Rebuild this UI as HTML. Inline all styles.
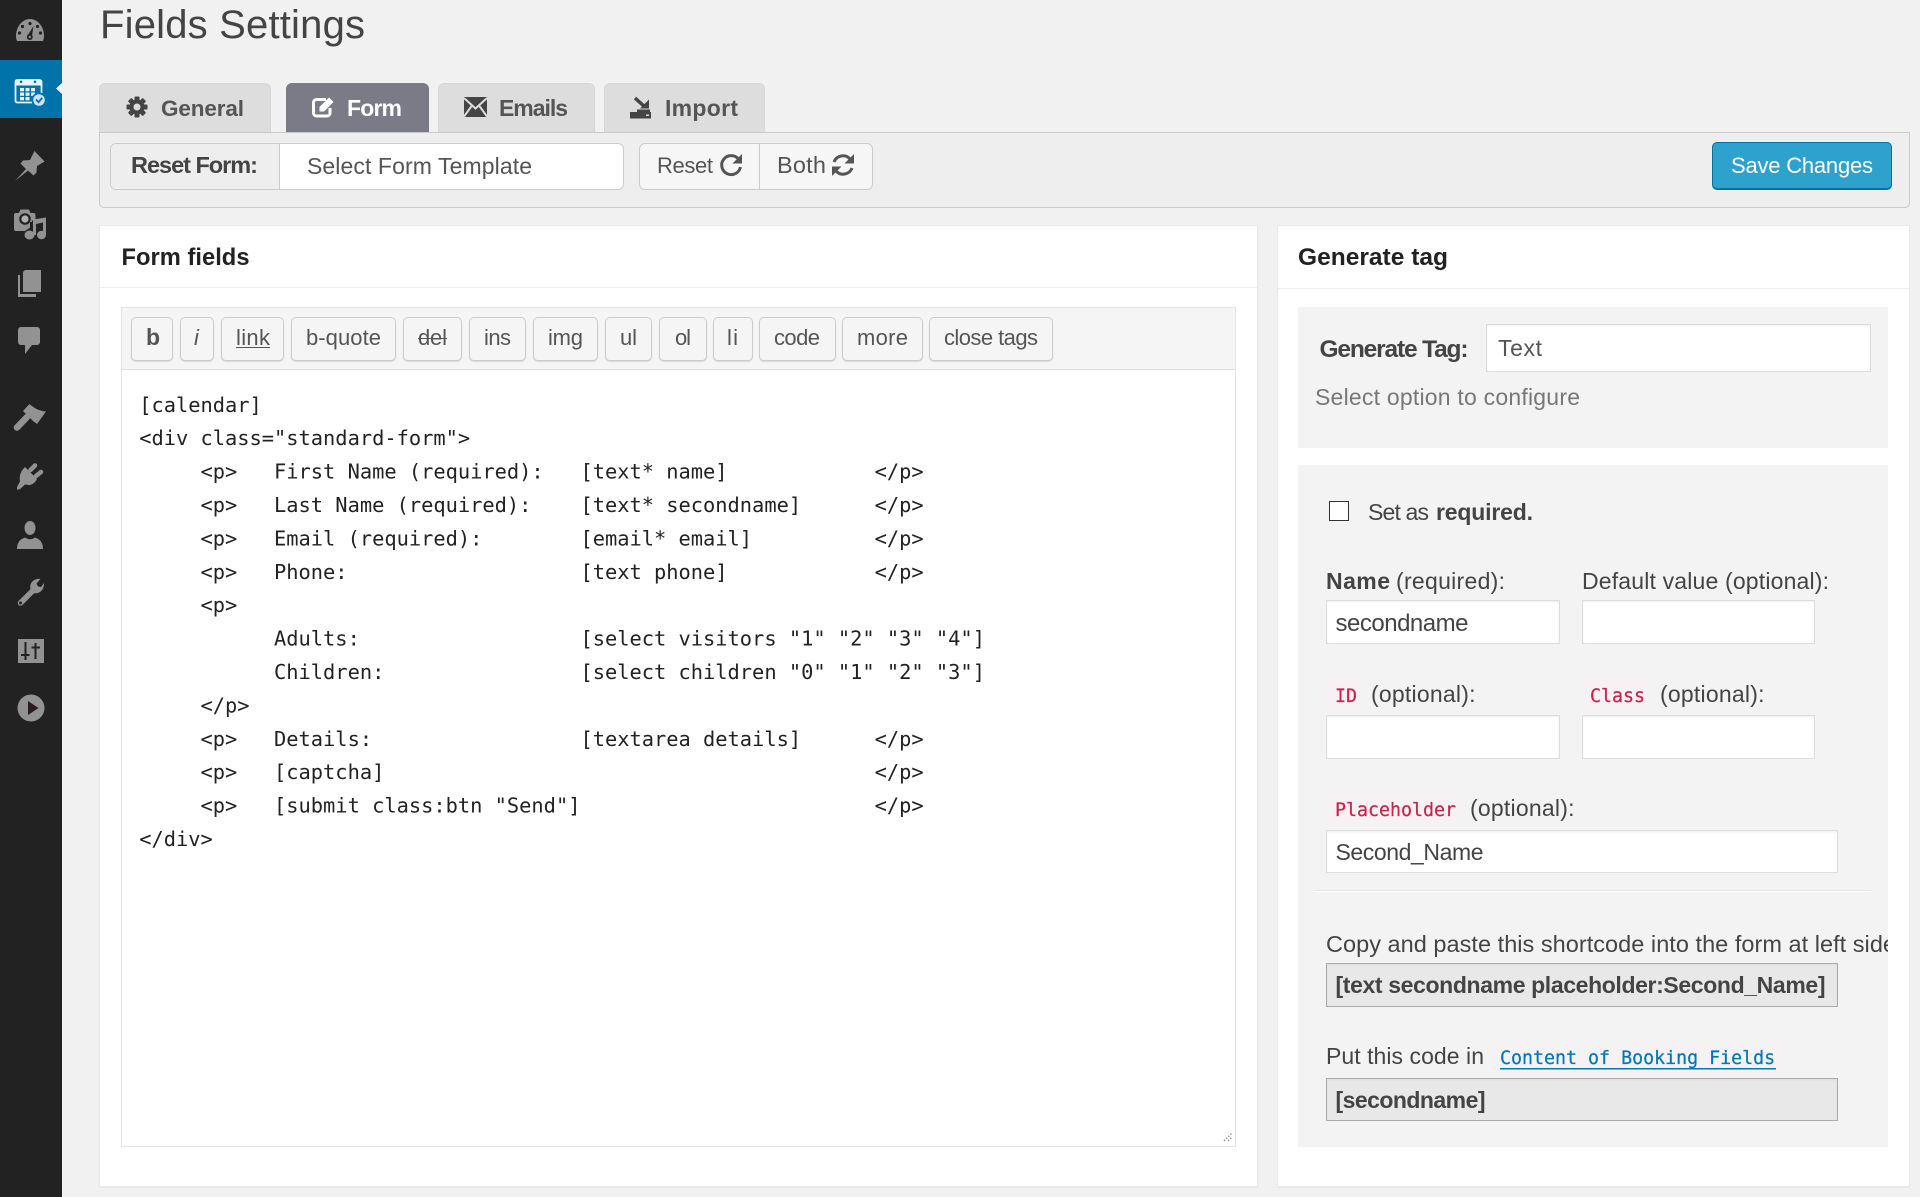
<!DOCTYPE html>
<html lang="en"><head><meta charset="utf-8"><title>Fields Settings</title>
<style>
html,body{margin:0;padding:0;width:1920px;height:1197px;overflow:hidden;background:#f1f1f1}
.b{position:absolute;box-sizing:border-box}
.tab{background:#ddd;border:1px solid #d6d6d6;border-bottom:0;border-radius:6px 6px 0 0;top:83px;height:49px}
.btn{background:#f5f5f5;border:1px solid #ccc;border-radius:5px;top:317px;height:44px;box-shadow:0 1px 1px rgba(0,0,0,.12)}
.inp{background:#fff;border:1px solid #ddd;box-shadow:inset 0 1px 2px rgba(0,0,0,.07)}
.ro{background:#e8e8e8;border:1px solid #aaa;box-shadow:inset 0 1px 2px rgba(0,0,0,.05)}
.code{background:#f6f1f3}
svg{position:absolute;left:0;top:0}
text{font-family:"Liberation Sans",sans-serif;font-size:22px;fill:#555;white-space:pre}
.k{font-family:"DejaVu Sans Mono","Liberation Mono",monospace;font-size:20.38px;fill:#222}
.m{font-family:"DejaVu Sans Mono","Liberation Mono",monospace;font-size:18.3px;fill:#c7254e;stroke:#c7254e;stroke-width:.25px}
.s{font-weight:700}
.d{fill:#444;font-size:23px}
.g{fill:#929292}
</style></head><body>
<div class="b" style="left:0;top:0;width:62px;height:1197px;background:#222"></div>
<div class="b" style="left:0;top:60px;width:62px;height:58px;background:#0073aa"></div>

<div class="b tab" style="left:99px;width:172px"></div>
<div class="b tab" style="left:286px;width:143px;background:#7b7a87;border-color:#7b7a87"></div>
<div class="b tab" style="left:438px;width:157px"></div>
<div class="b tab" style="left:604px;width:161px"></div>
<div class="b" style="left:99px;top:132px;width:1811px;height:76px;background:#eee;border:1px solid #c8c8ce;border-radius:0 0 5px 5px"></div>
<div class="b" style="left:110px;top:143px;width:514px;height:47px;background:#fff;border:1px solid #ccc;border-radius:6px;overflow:hidden"><div class="b" style="left:0;top:0;width:169px;height:45px;background:#eee;border-right:1px solid #ccc"></div></div>
<div class="b" style="left:639px;top:143px;width:234px;height:47px;background:#f6f6f6;border:1px solid #ccc;border-radius:6px"><div class="b" style="left:119px;top:0;width:1px;height:46px;background:#ccc"></div></div>
<div class="b" style="left:1712px;top:142px;width:180px;height:48px;background:#2ea2cc;border:1px solid #0074a2;border-bottom-width:2px;border-radius:5px"></div>

<div class="b" style="left:99px;top:225px;width:1159px;height:962px;background:#fff;border:1px solid #e8e8e8;box-shadow:0 1px 1px rgba(0,0,0,.04)"></div>
<div class="b" style="left:100px;top:287px;width:1157px;height:1px;background:#eee"></div>
<div class="b" style="left:121px;top:307px;width:1115px;height:840px;background:#fff;border:1px solid #e5e5e5"></div>
<div class="b" style="left:122px;top:308px;width:1113px;height:62px;background:#f5f5f5;border-bottom:1px solid #ddd"></div>
<div class="b btn" style="left:131px;width:42px"></div>
<div class="b btn" style="left:180px;width:34px"></div>
<div class="b btn" style="left:221px;width:63px"></div>
<div class="b btn" style="left:291px;width:105px"></div>
<div class="b btn" style="left:403px;width:59px"></div>
<div class="b btn" style="left:469px;width:57px"></div>
<div class="b btn" style="left:533px;width:65px"></div>
<div class="b btn" style="left:605px;width:47px"></div>
<div class="b btn" style="left:659px;width:48px"></div>
<div class="b btn" style="left:713px;width:40px"></div>
<div class="b btn" style="left:759px;width:77px"></div>
<div class="b btn" style="left:842px;width:81px"></div>
<div class="b btn" style="left:929px;width:124px"></div>

<div class="b" style="left:1277px;top:225px;width:633px;height:962px;background:#fff;border:1px solid #e8e8e8;box-shadow:0 1px 1px rgba(0,0,0,.04)"></div>
<div class="b" style="left:1278px;top:288px;width:631px;height:1px;background:#eee"></div>
<div class="b" style="left:1298px;top:307px;width:590px;height:141px;background:#f3f3f3"></div>
<div class="b" style="left:1298px;top:465px;width:590px;height:682px;background:#f3f3f3"></div>
<div class="b inp" style="left:1486px;top:324px;width:385px;height:48px"></div>
<div class="b" style="left:1329px;top:501px;width:20px;height:20px;background:#fff;border:1px solid #333"></div>
<div class="b inp" style="left:1326px;top:600px;width:234px;height:44px"></div>
<div class="b inp" style="left:1582px;top:600px;width:233px;height:44px"></div>
<div class="b code" style="left:1326px;top:678px;width:34px;height:34px"></div>
<div class="b code" style="left:1583px;top:678px;width:66px;height:34px"></div>
<div class="b inp" style="left:1326px;top:715px;width:234px;height:44px"></div>
<div class="b inp" style="left:1582px;top:715px;width:233px;height:44px"></div>
<div class="b code" style="left:1326px;top:793px;width:135px;height:33px"></div>
<div class="b inp" style="left:1326px;top:830px;width:512px;height:43px"></div>
<div class="b" style="left:1315px;top:890px;width:556px;height:1px;background:#e6e6e6"></div>
<div class="b" style="left:1315px;top:891px;width:556px;height:1px;background:#fff"></div>
<div class="b ro" style="left:1326px;top:963px;width:512px;height:44px"></div>
<div class="b code" style="left:1494px;top:1045px;width:288px;height:30px"></div>
<div class="b ro" style="left:1326px;top:1078px;width:512px;height:43px"></div>

<svg width="1920" height="1197" viewBox="0 0 1920 1197">
<defs><clipPath id="c"><rect x="1298" y="920" width="590" height="60"/></clipPath></defs>

<!-- sidebar icons -->
<path class="g" d="M16 36C16 27 22 19 30 19C38 19 44 27 44 36C44 38 43.500 40 43 41H17C16.500 40 16 38 16 36Z"/>
<g fill="#222"><circle cx="30" cy="23.500" r="1.600"/><circle cx="22.500" cy="26.500" r="1.600"/><circle cx="37.500" cy="26.500" r="1.600"/><circle cx="19.500" cy="33" r="1.600"/><circle cx="40.500" cy="33" r="1.600"/><path d="M33.500 26L32 35.500L28 35Z"/><circle cx="29.800" cy="37" r="3"/></g><circle cx="29.800" cy="37" r="1.200" fill="#929292"/>

<path fill="none" stroke="#e8f2f7" stroke-width="1.800" d="M34 102.500H17A2 2 0 0 1 15.500 100.500V82A2 2 0 0 1 17 80H39.500A2 2 0 0 1 41.500 82V93"/>
<rect x="15" y="80" width="27" height="5.500" fill="#e8f2f7"/>
<circle cx="21" cy="81.800" r="1.300" fill="#0073aa"/><circle cx="35" cy="81.800" r="1.300" fill="#0073aa"/>
<g fill="#e8f2f7"><rect x="20" y="88" width="4" height="3.300"/><rect x="25.500" y="88" width="4" height="3.300"/><rect x="31" y="88" width="4" height="3.300"/><rect x="20" y="92.500" width="4" height="3.300"/><rect x="25.500" y="92.500" width="4" height="3.300"/><rect x="31" y="92.500" width="4" height="3.300"/><rect x="20" y="97" width="4" height="3.300"/><rect x="25.500" y="97" width="4" height="3.300"/></g>
<circle cx="39" cy="100" r="7.500" fill="#0073aa"/><circle cx="39" cy="100" r="5.800" fill="#cfe3ee"/>
<path d="M36 99.500L38.600 102.200L42.200 97.800" fill="none" stroke="#0073aa" stroke-width="1.800"/>
<path d="M62 83L56 88.500L62 94Z" fill="#f1f1f1"/>

<path class="g" d="M15 181L26 169L20.500 163.500L23 160.500L30 160L34.500 151L44.500 161.500L37 166L36.500 172.500L33.500 175.500L28 170.500Z"/>

<path class="g" d="M20.500 209.500H29L30.500 213H33.500Q35.500 213 35.500 215V224L25 231H16Q14 231 14 229V215Q14 213 16 213H19Z"/>
<circle cx="25" cy="219" r="5.800" fill="#222"/><circle cx="25" cy="219" r="3.600" fill="#b0b0b0"/>
<path fill="none" stroke="#222" stroke-width="3" d="M32 222H47M31.500 222V231L25 237"/>
<path class="g" d="M33 226V219.500L46 217.500V235H43V222.500L36 224V235H33Z"/>
<ellipse class="g" cx="29.500" cy="235" rx="5" ry="4.500"/><ellipse class="g" cx="41.500" cy="235" rx="4.500" ry="4.300"/>

<path class="g" d="M18 275H20V294H36V297H18Z"/>
<path class="g" d="M25 270H41V292H23V272Z"/>

<path class="g" d="M21 327H37A3 3 0 0 1 40 330V342A3 3 0 0 1 37 345H32L25 354V345H21A3 3 0 0 1 18 342V330A3 3 0 0 1 21 327Z"/>

<path class="g" d="M23 411L29.500 404C34 408 39 411 46 411.500L37 424L33 421Z"/>
<path fill="none" stroke="#929292" stroke-width="6.500" stroke-linecap="round" d="M17 427.500L27 417"/>

<path class="g" d="M25 467L37 479C35 483 32 485 29 485L25 484.500L19.500 489.500H17V487L20 481.500C19 475 21 471 25 467Z"/>
<path fill="none" stroke="#929292" stroke-width="4.500" stroke-linecap="round" d="M30.500 470L35 465.500M36 476L41 472"/>

<ellipse class="g" cx="30" cy="528" rx="5.500" ry="7"/>
<path class="g" d="M17 549Q17 540 25 537.500Q30 541 35 537.500Q43 540 43 549Z"/>

<path fill="none" stroke="#929292" stroke-width="5.500" stroke-linecap="round" d="M20.500 603L34 589.500"/>
<path class="g" d="M44 583C44.500 590 39 594.500 33.500 593L30.500 589C29 583 34 578 40.500 579L36.500 583.500L38 586.500L41 587Z"/>
<circle cx="20.500" cy="603" r="1.500" fill="#222"/>

<rect class="g" x="18" y="639" width="26" height="24"/>
<path fill="none" stroke="#222" stroke-width="2" d="M25.500 642V660M21 655H29.500M35.500 643V659M31.500 647.500H40"/>

<circle class="g" cx="31" cy="708" r="13.500"/>
<path d="M28 701L38.500 708L28 715Z" fill="#2a1c1c"/>

<!-- title -->
<text x="100" y="38" textLength="265" style="font-size:40px;fill:#444">Fields Settings</text>

<!-- tabs -->
<circle cx="137" cy="107" r="7.500" fill="#444"/>
<g fill="#444"><rect x="134.500" y="96.500" width="5" height="21" rx="1"/><rect x="134.500" y="96.500" width="5" height="21" rx="1" transform="rotate(45 137 107)"/><rect x="134.500" y="96.500" width="5" height="21" rx="1" transform="rotate(90 137 107)"/><rect x="134.500" y="96.500" width="5" height="21" rx="1" transform="rotate(135 137 107)"/></g>
<circle cx="137" cy="107" r="3.500" fill="#ddd"/>
<text class="s" x="161" y="116" textLength="83" style="font-size:22.500px">General</text>

<path fill="none" stroke="#fff" stroke-width="3" d="M326 99.500H316.500A3 3 0 0 0 313.500 102.500V113A3 3 0 0 0 316.500 116H327A3 3 0 0 0 330 113V108"/>
<path fill="#fff" d="M319.500 107L329 97.500L333.500 102L324 111.500H319.500Z"/>
<text class="s" x="347" y="116" textLength="55" style="fill:#fff;font-size:23px">Form</text>

<rect x="464" y="97" width="23" height="20" fill="#444"/>
<path fill="none" stroke="#ddd" stroke-width="2" d="M464 98L475.500 108.500L487 98M464 116.500L472 105.500M487 116.500L479 105.500"/>
<text class="s" x="499" y="116" textLength="69" style="font-size:23px">Emails</text>

<rect x="630" y="112" width="21" height="6.500" fill="#444"/><rect x="646" y="114.500" width="3" height="1.500" fill="#ddd"/>
<path stroke="#444" stroke-width="3.500" d="M635 98L645 107"/><path fill="#444" d="M640 108.500H649V99.500Z"/><path fill="#444" d="M637 112V109.500H650V112Z"/>
<text class="s" x="665" y="116" textLength="73" style="font-size:23px">Import</text>

<!-- reset row -->
<text class="s" x="131" y="173" textLength="127" style="font-size:23.500px;fill:#444">Reset Form:</text>
<text x="307" y="174" textLength="225" style="font-size:23px">Select Form Template</text>
<text x="657" y="173" textLength="56" style="font-size:22px">Reset</text>
<path fill="none" stroke="#555" stroke-width="3" d="M738.500 159A9.500 9.500 0 1 0 740.500 167"/><path fill="#555" d="M742 154V163.500H732.500Z"/>
<text x="777" y="173" textLength="49" style="font-size:23.500px">Both</text>
<path fill="none" stroke="#555" stroke-width="3" d="M834 162A9.500 9.500 0 0 1 850 159M852 168A9.500 9.500 0 0 1 836 171"/><path fill="#555" d="M854 154V163.500H844.500ZM832 176V166.500H841.500Z"/>
<text x="1731" y="173" textLength="142" style="fill:#fff">Save Changes</text>

<!-- headers -->
<text class="s" x="121.500" y="265" textLength="128" style="font-size:23.700px;fill:#222">Form fields</text>
<text class="s" x="1298" y="265" textLength="150" style="font-size:24.500px;fill:#222">Generate tag</text>

<!-- quicktags -->
<text class="s" x="146" y="345" textLength="12" style="font-size:23px">b</text>
<text x="194" y="345" style="font-style:italic">i</text>
<text x="236" y="345" textLength="34">link</text><rect x="236" y="347" width="34" height="1" fill="#555"/>
<text x="306" y="345" textLength="75">b-quote</text>
<text x="418" y="345" textLength="29">del</text><rect x="418" y="338" width="29" height="1" fill="#555"/>
<text x="484" y="345" textLength="27">ins</text>
<text x="548" y="345" textLength="35">img</text>
<text x="620" y="345" textLength="17">ul</text>
<text x="675" y="345" textLength="16">ol</text>
<text x="727" y="345" textLength="11">li</text>
<text x="774" y="345" textLength="46">code</text>
<text x="857" y="345" textLength="51">more</text>
<text x="944" y="345" textLength="94">close tags</text>

<!-- code -->
<text class="k" x="139.200" y="411.800">[calendar]</text>
<text class="k" x="139.200" y="445.200">&lt;div class="standard-form"&gt;</text>
<text class="k" x="139.200" y="478.600">     &lt;p&gt;   First Name (required):   [text* name]            &lt;/p&gt;</text>
<text class="k" x="139.200" y="512">     &lt;p&gt;   Last Name (required):    [text* secondname]      &lt;/p&gt;</text>
<text class="k" x="139.200" y="545.400">     &lt;p&gt;   Email (required):        [email* email]          &lt;/p&gt;</text>
<text class="k" x="139.200" y="578.800">     &lt;p&gt;   Phone:                   [text phone]            &lt;/p&gt;</text>
<text class="k" x="139.200" y="612.200">     &lt;p&gt;</text>
<text class="k" x="139.200" y="645.600">           Adults:                  [select visitors "1" "2" "3" "4"]</text>
<text class="k" x="139.200" y="679">           Children:                [select children "0" "1" "2" "3"]</text>
<text class="k" x="139.200" y="712.400">     &lt;/p&gt;</text>
<text class="k" x="139.200" y="745.800">     &lt;p&gt;   Details:                 [textarea details]      &lt;/p&gt;</text>
<text class="k" x="139.200" y="779.200">     &lt;p&gt;   [captcha]                                        &lt;/p&gt;</text>
<text class="k" x="139.200" y="812.600">     &lt;p&gt;   [submit class:btn "Send"]                        &lt;/p&gt;</text>
<text class="k" x="139.200" y="846">&lt;/div&gt;</text>
<path stroke="#999" stroke-width="1.500" stroke-dasharray="1.500 1.500" d="M1224 1141L1232 1133M1228 1141L1232 1137"/>

<!-- generate panel -->
<text class="s" x="1319.500" y="357" textLength="149" style="font-size:24.500px;fill:#444">Generate Tag:</text>
<text x="1498" y="356" textLength="44" style="font-size:23px">Text</text>
<text x="1315" y="405" textLength="265" style="fill:#777;font-size:23px">Select option to configure</text>
<text x="1368" y="520" textLength="61" class="d">Set as</text>
<text x="1436" y="520" textLength="97" class="s d">required.</text>
<text x="1326" y="589" textLength="64" class="s d">Name</text>
<text x="1396" y="589" textLength="109" class="d">(required):</text>
<text x="1582" y="589" textLength="247" class="d">Default value (optional):</text>
<text x="1335.500" y="631" textLength="133" class="d" style="font-size:24px">secondname</text>
<text class="m" x="1335" y="702">ID</text>
<text x="1371" y="702" textLength="104.500" class="d">(optional):</text>
<text class="m" x="1590" y="702">Class</text>
<text x="1660" y="702" textLength="104.500" class="d">(optional):</text>
<text class="m" x="1335" y="816">Placeholder</text>
<text x="1470" y="816" textLength="104.500" class="d">(optional):</text>
<text x="1335.500" y="860" textLength="148" class="d">Second_Name</text>
<g clip-path="url(#c)"><text x="1326" y="952" textLength="570" class="d" style="font-size:23.500px">Copy and paste this shortcode into the form at left side</text></g>
<text class="s d" x="1335.500" y="993" textLength="490" style="font-size:23px">[text secondname placeholder:Second_Name]</text>
<text x="1326" y="1064" textLength="158" class="d">Put this code in</text>
<text class="m" x="1500" y="1064" style="fill:#0079b8;stroke:#0079b8">Content of Booking Fields</text>
<rect x="1500" y="1068" width="276" height="1.500" fill="#0079b8"/>
<text class="s d" x="1335.500" y="1108" textLength="150" style="font-size:23px">[secondname]</text>
</svg>
</body></html>
